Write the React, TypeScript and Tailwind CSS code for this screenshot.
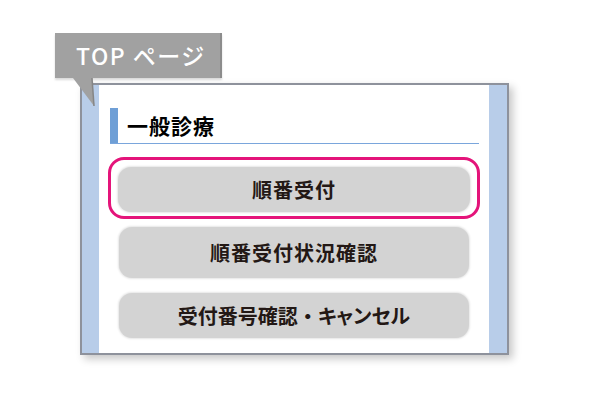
const jp = "font-['Noto_Sans_CJK_JP','Noto_Sans',sans-serif]";

function MenuButton({ children, h, className = "" }: { children: React.ReactNode; h: string; className?: string }) {
  return (
    <div
      className={`${h} ${className} flex items-center justify-center rounded-[13px] bg-[#d3d3d3] shadow-[0_0_2px_1px_rgba(0,0,0,0.1)] text-[20px] font-bold text-[#231815]`}
    >
      {children}
    </div>
  );
}

export default function App() {
  return (
    <div className={`w-[600px] h-[400px] bg-white pt-[83px] pl-[80px] ${jp}`}>
      <div className="relative w-[429px]">
        {/* tab label */}
        <div className="absolute left-[-25px] top-[-50px] z-10">
          <div className="w-[167px] h-[45px] bg-[#a1a1a1] border-r-2 border-[#8c8c8c] shadow-[0_2px_2px_rgba(0,0,0,0.15)] flex items-center pl-[21px] text-white text-[23px] font-medium tracking-[1.5px]">
            TOP ページ
          </div>
          <svg className="absolute left-[18px] top-[44px]" width="24" height="31" viewBox="0 0 24 31">
            <polygon points="0,1 19,1 21,29" fill="#a1a1a1" />
            <line x1="19" y1="1" x2="21" y2="29" stroke="#858585" strokeWidth="1.5" />
          </svg>
        </div>

        {/* frame */}
        <div className="h-[272px] border-2 border-[#8e929c] flex shadow-[4px_4px_8px_rgba(0,0,0,0.22)]">
          <div className="w-[17px] bg-[#b8cde9]" />
          <div className="flex-1 bg-white px-[9px] pt-[23px]">
            <div className="ml-[2px] mr-[1px] h-[36px] flex items-center border-b border-[#7aa6dc]">
              <div className="w-[8px] self-stretch bg-[#6f9fd6]" />
              <span className="ml-[9px] text-[21px] font-bold text-black tracking-[1px]">一般診療</span>
            </div>

            <div className="mt-[13px] border-[3px] border-[#e4147a] rounded-[16px] pt-[7px] pb-[4px] px-[7px]">
              <MenuButton h="h-[45px]" className="tracking-[1px]">順番受付</MenuButton>
            </div>
            <MenuButton h="h-[51px]" className="mt-[8px] mx-[11px] tracking-[1px]">順番受付状況確認</MenuButton>
            <MenuButton h="h-[45px]" className="mt-[15px] mx-[11px]">
              <span>受付番号確認</span>
              <span>・</span>
              <span className="[font-feature-settings:'palt']">キャンセル</span>
            </MenuButton>
          </div>
          <div className="w-[18px] bg-[#b8cde9]" />
        </div>
      </div>
    </div>
  );
}
